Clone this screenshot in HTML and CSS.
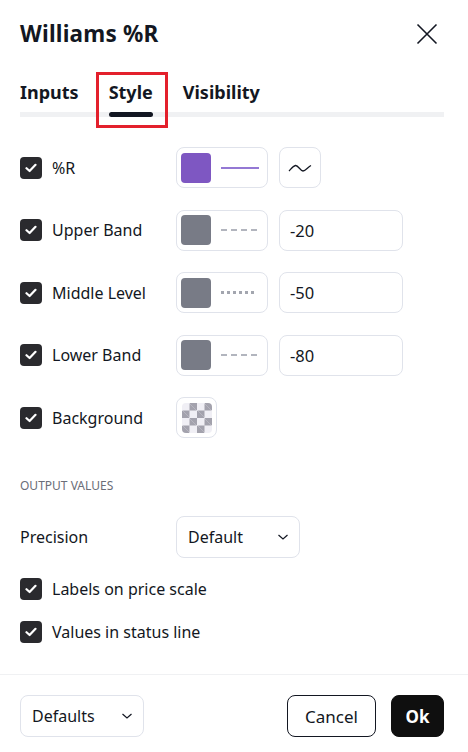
FILE: index.html
```html
<!DOCTYPE html>
<html>
<head>
<meta charset="utf-8">
<link rel="stylesheet" href="styles.css">
</head>
<body>
<div class="dialog">
  <div class="header">
    <div class="title">Williams %R</div>
    <button class="close" aria-label="Close">
      <svg width="22" height="22" viewBox="0 0 22 22"><path d="M1.5 1.5 L20.5 20.5 M20.5 1.5 L1.5 20.5" stroke="#131722" stroke-width="1.6" fill="none"/></svg>
    </button>
  </div>
  <div class="tabs">
    <div class="tab">Inputs</div>
    <div class="tab active">Style<span class="highlight"></span></div>
    <div class="tab">Visibility</div>
  </div>
  <div class="content">
    <div class="row">
      <label class="check"><span class="box"><svg width="12" height="10" viewBox="0 0 12 10"><path d="M1.5 5.2 L4.6 8 L10.5 1.8" stroke="#fff" stroke-width="2.2" fill="none" stroke-linecap="round" stroke-linejoin="round"/></svg></span>%R</label>
      <div class="controls">
        <div class="colorbtn"><span class="swatch purple"></span><span class="line solid"></span></div>
        <div class="plotbtn"><svg width="24" height="12" viewBox="0 0 24 12"><path d="M1 9 C3 7 5 4 7.5 3.5 C10 3 12.5 9 15 9 C17.5 9 20 5 23 3.5" stroke="#131722" stroke-width="1.3" fill="none" stroke-linejoin="round"/></svg></div>
      </div>
    </div>
    <div class="row">
      <label class="check"><span class="box"><svg width="12" height="10" viewBox="0 0 12 10"><path d="M1.5 5.2 L4.6 8 L10.5 1.8" stroke="#fff" stroke-width="2.2" fill="none" stroke-linecap="round" stroke-linejoin="round"/></svg></span>Upper Band</label>
      <div class="controls">
        <div class="colorbtn"><span class="swatch gray"></span><span class="line dashed"></span></div>
        <div class="input">-20</div>
      </div>
    </div>
    <div class="row">
      <label class="check"><span class="box"><svg width="12" height="10" viewBox="0 0 12 10"><path d="M1.5 5.2 L4.6 8 L10.5 1.8" stroke="#fff" stroke-width="2.2" fill="none" stroke-linecap="round" stroke-linejoin="round"/></svg></span>Middle Level</label>
      <div class="controls">
        <div class="colorbtn"><span class="swatch gray"></span><span class="line dotted"></span></div>
        <div class="input">-50</div>
      </div>
    </div>
    <div class="row">
      <label class="check"><span class="box"><svg width="12" height="10" viewBox="0 0 12 10"><path d="M1.5 5.2 L4.6 8 L10.5 1.8" stroke="#fff" stroke-width="2.2" fill="none" stroke-linecap="round" stroke-linejoin="round"/></svg></span>Lower Band</label>
      <div class="controls">
        <div class="colorbtn"><span class="swatch gray"></span><span class="line dashed"></span></div>
        <div class="input">-80</div>
      </div>
    </div>
    <div class="row">
      <label class="check"><span class="box"><svg width="12" height="10" viewBox="0 0 12 10"><path d="M1.5 5.2 L4.6 8 L10.5 1.8" stroke="#fff" stroke-width="2.2" fill="none" stroke-linecap="round" stroke-linejoin="round"/></svg></span>Background</label>
      <div class="controls">
        <div class="bgbtn"><span class="checker"></span></div>
      </div>
    </div>

    <div class="section">OUTPUT VALUES</div>

    <div class="row precision">
      <span class="plain">Precision</span>
      <div class="controls">
        <div class="select">Default<svg width="12" height="8" viewBox="0 0 12 8"><path d="M1.5 2 L6 6 L10.5 2" stroke="#131722" stroke-width="1.2" fill="none"/></svg></div>
      </div>
    </div>
    <div class="checkrow">
      <label class="check"><span class="box"><svg width="12" height="10" viewBox="0 0 12 10"><path d="M1.5 5.2 L4.6 8 L10.5 1.8" stroke="#fff" stroke-width="2.2" fill="none" stroke-linecap="round" stroke-linejoin="round"/></svg></span>Labels on price scale</label>
    </div>
    <div class="checkrow">
      <label class="check"><span class="box"><svg width="12" height="10" viewBox="0 0 12 10"><path d="M1.5 5.2 L4.6 8 L10.5 1.8" stroke="#fff" stroke-width="2.2" fill="none" stroke-linecap="round" stroke-linejoin="round"/></svg></span>Values in status line</label>
    </div>
  </div>
  <div class="footer">
    <div class="select small">Defaults<svg width="12" height="8" viewBox="0 0 12 8"><path d="M1.5 2 L6 6 L10.5 2" stroke="#131722" stroke-width="1.2" fill="none"/></svg></div>
    <div class="actions">
      <button class="btn outline">Cancel</button>
      <button class="btn solid">Ok</button>
    </div>
  </div>
</div>
</body>
</html>
```
FILE: styles.css
```css
* { box-sizing: border-box; }
html, body { margin: 0; padding: 0; background: #fff; }
body {
  font-family: "Noto Sans", "DejaVu Sans", sans-serif;
  color: #131722;
  font-size: 16px;
}
.dialog { width: 468px; height: 752px; display: flex; flex-direction: column; }
.header {
  display: flex; align-items: center; justify-content: space-between;
  padding: 20px 30px 0 20px; height: 48px;
}
.title { font-size: 22.5px; font-weight: 700; line-height: 28px; letter-spacing: 0.2px; }
.close { border: 0; background: none; padding: 0; width: 22px; height: 22px; display: flex; }
.tabs {
  margin: 24px 24px 0 20px;
  display: flex; gap: 30px;
  border-bottom: 5px solid #f0f1f3;
  height: 45px;
}
.tab {
  position: relative;
  font-size: 18px; font-weight: 700; line-height: 24px;
  padding-top: 8px;
  height: 40px;
}
.tab.active::after {
  content: ""; position: absolute; left: 0; right: 0; bottom: -5px;
  height: 5px; border-radius: 3px; background: #131722;
}
.highlight {
  position: absolute; left: -13px; right: -15px; top: 0; bottom: -16px;
  border: 3px solid #e3202c;
}
.content { padding: 30px 20px 0 20px; flex: 1; }
.row {
  display: grid; grid-template-columns: 156px 1fr;
  align-items: center; height: 41px; margin-bottom: 21.5px;
}
.check { display: flex; align-items: center; gap: 10px; font-size: 16px; line-height: 22px; }
.box {
  width: 22px; height: 22px; border-radius: 4px; background: #2a2a2e;
  display: flex; align-items: center; justify-content: center;
}
.controls { display: flex; gap: 11px; align-items: center; }
.colorbtn {
  width: 92px; height: 41px; border: 1px solid #e0e3eb; border-radius: 8px;
  display: flex; align-items: center; padding: 0 8px 0 4px; gap: 10px;
}
.swatch { width: 30px; height: 30px; border-radius: 4px; display: block; }
.swatch.purple { background: #7e57c2; }
.swatch.gray { background: #787b86; }
.line { flex: 1; height: 2px; display: block; }
.line.solid { background: #9478d4; height: 2px; }
.line.dashed { background: repeating-linear-gradient(90deg, #b2b5be 0 6px, transparent 6px 10px); height: 1.5px; }
.line.dotted { background: repeating-linear-gradient(90deg, #a3a6af 0 3px, transparent 3px 6px); height: 3px; margin-right: 2px; }
.plotbtn {
  width: 42px; height: 41px; border: 1px solid #e0e3eb; border-radius: 8px;
  display: flex; align-items: center; justify-content: center;
}
.input {
  width: 124px; height: 41px; border: 1px solid #e0e3eb; border-radius: 8px;
  display: flex; align-items: center; padding-left: 10px; font-size: 16.5px;
}
.bgbtn {
  width: 41px; height: 41px; border: 1px solid #e0e3eb; border-radius: 8px;
  display: flex; align-items: center; justify-content: center;
}
.checker {
  width: 30px; height: 30px; border-radius: 4px; display: block;
  background-color: #f0eff5;
  background-image:
    linear-gradient(45deg, #a3a2ad 25%, transparent 25%, transparent 75%, #a3a2ad 75%),
    linear-gradient(45deg, #a3a2ad 25%, transparent 25%, transparent 75%, #a3a2ad 75%);
  background-size: 15px 15px;
  background-position: 0 0, 7.5px 7.5px;
}
.section {
  font-size: 12px; color: #6a6d78; line-height: 16px; margin-top: 40px;
}
.row.precision { margin-top: 22px; margin-bottom: 0; height: 42px; }
.plain { font-size: 16px; }
.select {
  width: 124px; height: 42px; border: 1px solid #e0e3eb; border-radius: 8px;
  display: flex; align-items: center; justify-content: space-between;
  padding: 0 10px 0 11px; font-size: 16px;
}
.checkrow { margin-top: 20px; height: 22px; }
.checkrow + .checkrow { margin-top: 21px; }
.footer {
  border-top: 1px solid #f0f1f3;
  padding: 20px 24px 15px 20px;
  display: flex; justify-content: space-between; align-items: center;
}
.select.small { width: 124px; }
.actions { display: flex; gap: 15px; }
.btn {
  height: 42px; border-radius: 8px; font-family: inherit; font-size: 17px;
  padding: 0 16px; cursor: pointer;
}
.btn.outline { width: 89px; background: #fff; border: 1px solid #131722; color: #131722; }
.btn.solid { width: 53px; background: #0f0f0f; border: 1px solid #0f0f0f; color: #fff; font-weight: 700; padding: 0; }
```
